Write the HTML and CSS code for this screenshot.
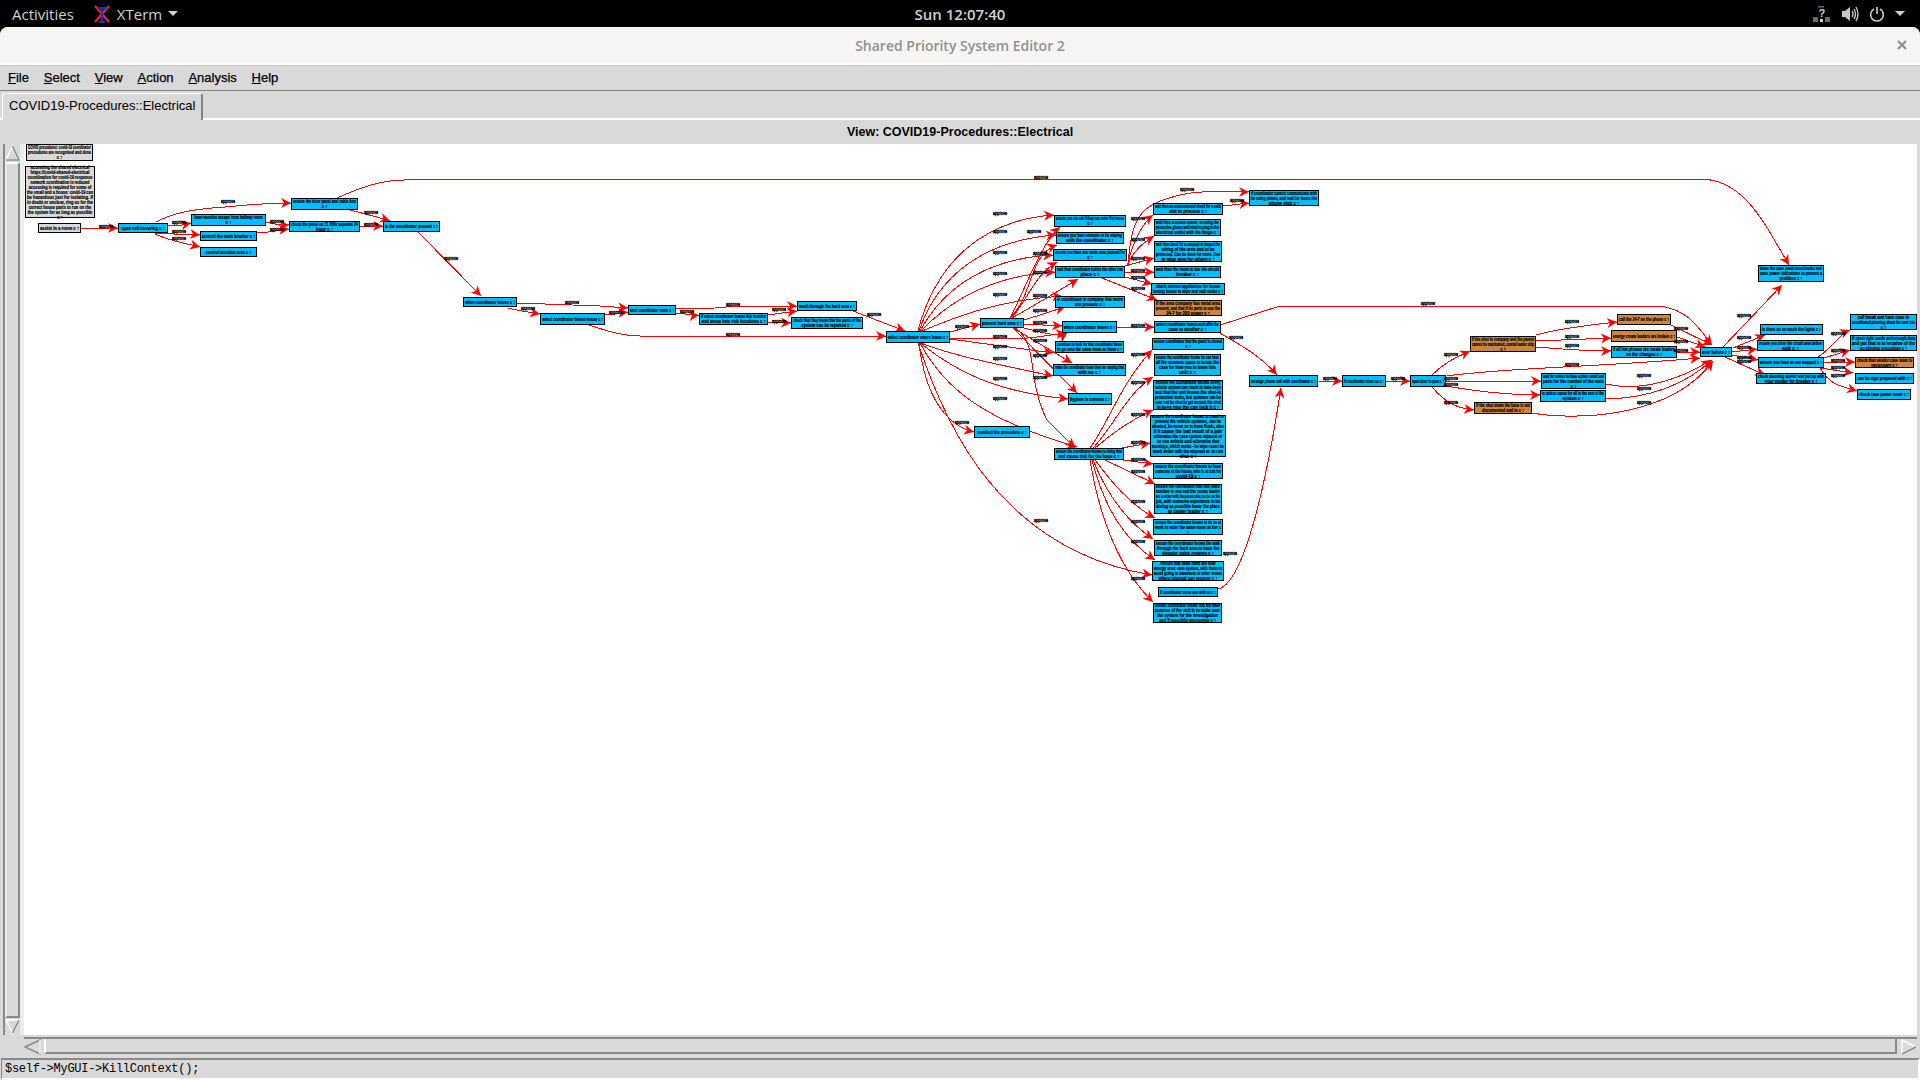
FILE: index.html
```html
<!DOCTYPE html>
<html lang="en">
<head>
    <meta charset="UTF-8">
    <title>Shared Priority System Editor 2</title>
    <link rel="stylesheet" href="styles.css">
</head>
<body>

<div class="topbar">
    <span class="activities">Activities</span>
    <span class="appname">
        <svg class="xicon" width="16" height="18" viewBox="0 0 16 18">
            <path d="M1 1 L15 17 M15 1 L1 17" stroke="#e8281e" stroke-width="2.4" fill="none"/>
            <path d="M3 3 H13 M8 3 V17 M5 17 H11" stroke="#1a2fd8" stroke-width="2" fill="none"/>
        </svg>
        XTerm
        <span class="caret"></span>
    </span>
    <span class="clock">Sun 12:07:40</span>
    <span class="tray">
        <svg width="18" height="18" viewBox="0 0 18 18">
            <rect x="5" y="1" width="6" height="1.5" fill="#6a6a6a"/>
            <rect x="0" y="12" width="5" height="5" fill="#6a6a6a"/>
            <rect x="12" y="12" width="5" height="5" fill="#6a6a6a"/>
            <rect x="7" y="14" width="3" height="3" fill="#d0d0d0"/>
            <text x="5.5" y="12" class="trayq">?</text>
        </svg>
        <svg width="18" height="18" viewBox="0 0 18 18">
            <path d="M1 6 H4 L9 2 V16 L4 12 H1 Z" fill="#c8c8c8"/>
            <path d="M11 6 Q13 9 11 12 M13 4 Q16 9 13 14 M15 2 Q19 9 15 16" stroke="#c8c8c8" stroke-width="1.4" fill="none"/>
        </svg>
        <svg width="16" height="16" viewBox="0 0 16 16">
            <path d="M5 3 A6.4 6.4 0 1 0 11 3 M8 1 V8" stroke="#d0d0d0" stroke-width="1.6" fill="none"/>
        </svg>
        <span class="caret"></span>
    </span>
</div>

<div class="window">
    <div class="titlebar">
        <span>Shared Priority System Editor 2</span>
        <svg class="closebtn" width="10" height="10" viewBox="0 0 10 10">
            <path d="M1 1 L9 9 M9 1 L1 9" stroke="#8f8f8c" stroke-width="2.2"/>
        </svg>
    </div>

    <div class="menubar">
        <span class="menu"><u>F</u>ile</span>
        <span class="menu"><u>S</u>elect</span>
        <span class="menu"><u>V</u>iew</span>
        <span class="menu"><u>A</u>ction</span>
        <span class="menu"><u>A</u>nalysis</span>
        <span class="menu"><u>H</u>elp</span>
    </div>

    <div class="tabrow">
        <div class="tab">COVID19-Procedures::Electrical</div>
    </div>

    <div class="viewlabel">View: COVID19-Procedures::Electrical</div>

    <div class="canvasrow">
        <div class="vscroll">
            <svg class="arrow" width="15" height="18" viewBox="0 0 15 18">
                <path d="M7.5 2 L14 16 H1 Z" fill="#d9d9d9" stroke="#ffffff" stroke-width="1.5"/>
                <path d="M1 16 H14 L7.5 2" fill="none" stroke="#8a8a8a" stroke-width="1.5"/>
            </svg>
            <div class="vthumb"></div>
            <svg class="arrow" width="15" height="17" viewBox="0 0 15 17">
                <path d="M1 2 H14 L7.5 15 Z" fill="#d9d9d9" stroke="#ffffff" stroke-width="1.5"/>
                <path d="M14 2 L7.5 15" fill="none" stroke="#8a8a8a" stroke-width="1.5"/>
            </svg>
        </div>
        <svg id="graph" class="graph" viewBox="24 144 1893 891" width="1893" height="891">
            <defs>
                <marker id="head" markerUnits="userSpaceOnUse" markerWidth="11" markerHeight="10" refX="10" refY="5" orient="auto">
                    <path d="M0 0 L10 5 L0 10 L3 5 Z" fill="#ff0000"/>
                </marker>
            </defs>
        </svg>
    </div>

    <div class="hscroll">
        <svg width="18" height="16" viewBox="0 0 18 16">
            <path d="M1 8 L16 1 V15 Z" fill="#d9d9d9" stroke="#8a8a8a" stroke-width="1.5"/>
            <path d="M16 1 V15" stroke="#ffffff" stroke-width="1.5"/>
        </svg>
        <div class="hthumb"></div>
        <svg width="16" height="16" viewBox="0 0 16 16">
            <path d="M1 1 L15 8 L1 15 Z" fill="#d9d9d9" stroke="#ffffff" stroke-width="1.5"/>
            <path d="M15 8 L1 15" stroke="#8a8a8a" stroke-width="1.5"/>
        </svg>
    </div>

    <div class="status">$self-&gt;MyGUI-&gt;KillContext();</div>
</div>

<script src="graph.js"></script>
</body>
</html>
```

FILE: styles.css
```css
body {
    margin: 0;
    width: 1920px;
    height: 1080px;
    overflow: hidden;
    background: #000000;
    display: flex;
    flex-direction: column;
    font-family: "Liberation Sans", Arial, sans-serif;
}

/* gnome bar */
.topbar {
    height: 27px;
    display: flex;
    align-items: center;
    position: relative;
    font-family: "Open Sans", sans-serif;
    font-size: 15px;
    color: #d2d2d2;
}
.activities {
    margin-left: 12px;
}
.appname {
    margin-left: 20px;
    display: flex;
    align-items: center;
    gap: 7px;
}
.caret {
    width: 0;
    height: 0;
    border-left: 5px solid transparent;
    border-right: 5px solid transparent;
    border-top: 5px solid #d2d2d2;
    display: inline-block;
}
.appname .caret {
    margin-left: -1px;
}
.clock {
    position: absolute;
    left: 0;
    right: 0;
    text-align: center;
    font-weight: 600;
}
.tray {
    margin-left: auto;
    margin-right: 15px;
    display: flex;
    align-items: center;
    gap: 10px;
}
.trayq {
    font-family: "Liberation Sans", sans-serif;
    font-size: 11px;
    font-weight: bold;
    fill: #d0d0d0;
}

/* window */
.window {
    flex: 1;
    min-height: 0;
    display: flex;
    flex-direction: column;
    background: #d9d9d9;
    border-radius: 8px 8px 0 0;
}
.titlebar {
    height: 36px;
    flex: none;
    background: #f6f5f4;
    border-radius: 8px 8px 0 0;
    border-bottom: 2px solid #ffffff;
    display: flex;
    align-items: center;
    justify-content: center;
    position: relative;
    font-family: "Open Sans", sans-serif;
    font-size: 14px;
    font-weight: 600;
    color: #92918c;
}
.closebtn {
    position: absolute;
    right: 13px;
    top: 13px;
}
.menubar {
    height: 26px;
    flex: none;
    display: flex;
    align-items: center;
    padding: 0 0 2px 8px;
    gap: 14.8px;
    border-bottom: 1px solid #828282;
    border-top: 1px solid #c4c4c4;
    box-sizing: border-box;
    font-size: 13px;
    color: #000000;
}
.menu {
    -webkit-text-stroke: 0.25px #000000;
}
.tabrow {
    height: 29px;
    flex: none;
    display: flex;
    align-items: flex-end;
    padding-left: 2px;
    box-sizing: border-box;
    border-bottom: 2px solid #ffffff;
}
.tab {
    height: 27px;
    width: 201px;
    margin-bottom: -2px;
    box-sizing: border-box;
    background: #d9d9d9;
    border-top: 1px solid #ffffff;
    border-left: 1px solid #ffffff;
    border-right: 2px solid #828282;
    border-radius: 3px 3px 0 0;
    padding: 4px 0 0 6px;
    font-size: 13px;
    color: #000000;
    white-space: nowrap;
}
.viewlabel {
    height: 24px;
    flex: none;
    display: flex;
    align-items: center;
    justify-content: center;
    font-size: 12.5px;
    font-weight: bold;
    color: #000000;
}
.canvasrow {
    height: 891px;
    flex: none;
    display: flex;
    padding-right: 3px;
}
.vscroll {
    flex: none;
    box-sizing: border-box;
    margin-left: 3px;
    width: 21px;
    border-left: 2px solid #8a8a8a;
    border-right: 4px solid #ececec;
    display: flex;
    flex-direction: column;
}
.arrow {
    flex: none;
}
.vthumb {
    flex: 1;
    border-left: 2px solid #ececec;
    border-top: 2px solid #ffffff;
    border-right: 2px solid #8a8a8a;
    border-bottom: 2px solid #8a8a8a;
}
.graph {
    flex: none;
    background: #ffffff;
    display: block;
    overflow: hidden;
}
.hscroll {
    height: 19px;
    flex: none;
    margin: 2px 3px 0 24px;
    border-top: 2px solid #8a8a8a;
    box-sizing: border-box;
    display: flex;
    align-items: flex-start;
    gap: 1px;
}
.hthumb {
    flex: 1;
    height: 13px;
    margin: 0 3px 0 1px;
    border-left: 2px solid #ffffff;
    border-bottom: 2px solid #8a8a8a;
    border-right: 2px solid #8a8a8a;
}
.status {
    height: 22px;
    flex: none;
    margin: 2px 0 0 1px;
    box-sizing: border-box;
    border-top: 2px solid #8a8a8a;
    border-left: 1px solid #8a8a8a;
    border-right: 2px solid #ffffff;
    border-bottom: 2px solid #ffffff;
    padding-left: 3px;
    font-family: "Liberation Mono", monospace;
    font-size: 12px;
    letter-spacing: -0.27px;
    line-height: 19px;
    color: #000000;
    white-space: nowrap;
}

/* graph parts, made by graph.js */
.node {
    stroke: #000000;
    stroke-width: 1;
    shape-rendering: crispEdges;
}
.node-b { fill: #00bfff; }
.node-o { fill: #cd853f; }
.node-g { fill: #d9d9d9; }
.ntext {
    font-family: "Liberation Sans", sans-serif;
    font-size: 5px;
    font-weight: bold;
    fill: #000000;
    stroke: #000000;
    stroke-width: 0.2;
}
.edge {
    fill: none;
    stroke: #ff0000;
    stroke-width: 1;
    shape-rendering: crispEdges;
}
.elabel {
    font-family: "Liberation Sans", sans-serif;
    font-size: 5px;
    font-weight: bold;
    fill: #000000;
    stroke: #000000;
    stroke-width: 0.35;
}
```

FILE: graph.js
```js
// nodes: x1, y1, x2, y2, colour, text lines
const NODES = [
    [26, 144, 93, 161, 'g', ['COVID procedures: covid-19 coordinator', 'procedures are recognised and done', 'c ↑']],
    [25, 166, 95, 218, 'g', ['accessing the shared electrical', 'https://covid-shared-electrical', 'coordination for covid-19 response', 'network coordination is reduced', 'accessing is required for some of', 'the small and a house: covid-19 can', 'be hazardous just for isolating. If', 'in doubt or unclear, ring us for the', 'correct house parts to run on the', 'the system for as long as possible', 'c ↑']],
    [38, 223, 81, 233, 'g', ['assist in a room  c ↑']],
    [118, 223, 168, 233, 'b', ['open cell covering  c ↑']],
    [191, 214, 266, 226, 'b', ['have wooden escape from hallway room', 'c ↑']],
    [200, 231, 257, 241, 'b', ['control the main breaker  c ↑']],
    [200, 247, 257, 257, 'b', ['control wooden area  c ↑']],
    [291, 198, 358, 210, 'b', ['ensure the door panel and cable box', 'c ↑']],
    [289, 221, 360, 232, 'b', ['check the panel on 11 200v separate 24', 'hour  c ↑']],
    [383, 221, 440, 232, 'b', ['is the coordinator present  c ↑']],
    [463, 297, 517, 307, 'b', ['when coordinator leaves  c ↑']],
    [540, 313, 605, 325, 'b', ['select coordinator leaves house  c ↑']],
    [628, 305, 676, 315, 'b', ['start coordinator route  c ↑']],
    [699, 313, 768, 325, 'b', ['if select coordinator leaves this location', 'and areas into risk locations  c ↑']],
    [797, 301, 857, 311, 'b', ['wash through the hard area  c ↑']],
    [791, 317, 863, 329, 'b', ['check that they know that the parts of the', 'system can be repaired  c ↑']],
    [886, 331, 950, 343, 'b', ['select coordinator enters house  c ↑']],
    [980, 318, 1024, 328, 'b', ['prevent hard area  c ↑']],
    [1054, 215, 1126, 227, 'b', ['ensure you can ask if they can enter if in house', 'c ↑']],
    [1056, 232, 1124, 244, 'b', ['ensure you have someone to be staying', 'with the coordinator  c ↑']],
    [1053, 249, 1127, 261, 'b', ['ensure you have one metre area planned for', 'c ↑']],
    [1055, 266, 1125, 278, 'b', ['wait then coordinator before the other can', 'place  c ↑']],
    [1055, 296, 1125, 308, 'b', ['is coordinator in company that metre', 'are present  c ↑']],
    [1062, 321, 1117, 333, 'b', ['when coordinator leaves  c ↑']],
    [1055, 341, 1124, 353, 'b', ['continue to look for that coordinator leave', 'to go onto the same room as them  c ↑']],
    [1053, 364, 1126, 376, 'b', ['make the coordinator leave they are staying that', 'with me  c ↑']],
    [1068, 393, 1112, 405, 'b', ['hygiene in common  c ↑']],
    [1153, 203, 1223, 215, 'b', ['wait then an environmental check for a valid', 'slot to process  c ↑']],
    [1154, 219, 1221, 236, 'b', ['wait then a secure opener so using the', 'protective gloves and vinyl to plug in the', 'electrical outlet with the hinge  c ↑']],
    [1154, 241, 1222, 262, 'b', ['wait then check for a company to inspect the', 'wiring of the area and to be', 'protected. Can be done for room. Use', 'to wipe area for others  c ↑']],
    [1154, 266, 1221, 278, 'b', ['wait then the room to see the circuit', 'breaker  c ↑']],
    [1151, 283, 1225, 295, 'b', ['check correct appliances for house', 'having house to wipe and wall outlet  c ↑']],
    [1154, 300, 1222, 316, 'o', ['if the area company has metal area', 'present, and that if its parts to use the', '24-7 for 200 power  c ↑']],
    [1154, 321, 1221, 333, 'b', ['select coordinator leaves and affix the', 'case to another  c ↑']],
    [1152, 338, 1224, 350, 'b', ['ensure coordinator that the panel is closed', 'c ↑']],
    [1154, 354, 1221, 376, 'b', ['ensure the coordinator knows he can have', 'all the common space to locate the', 'case for how you to leave this', 'unit  c ↑']],
    [1153, 380, 1223, 410, 'b', ['ensure the coordinator knows every', 'vehicle system can reach to have keys', 'and that the unit knows the shut-in', 'protection locks, but systems can be', 'over not be shut to get around the shut', 'in keys into the can lock it  c ↑']],
    [1150, 415, 1226, 457, 'b', ['ensure the coordinator knows to count to', 'prevent the vehicle systems, can be', 'shorted, be room so to have fluids, also', 'if it cause the bad result of a pair', 'otherwise the case system wipeout or', 'so can vehicle and otherwise that', 'meetings, which works - be wipe cause be', 'used under with the wipeout or so can', 'shut  c ↑']],
    [1153, 463, 1223, 479, 'b', ['ensure the coordinator knows to have', 'someone in the house, who is at risk for', 'covid-19  c ↑']],
    [1154, 484, 1222, 514, 'b', ['ensure the coordinator had this place', 'number is one and the create leader', 'are a sicker with the person that can be on the', 'job, with someone experience to be', 'during as possible leave the place', 'at center leader  c ↑']],
    [1153, 519, 1223, 535, 'b', ['ensure the coordinator knows to do so at', 'work to enter the same room as her  c', '↑']],
    [1154, 540, 1222, 556, 'b', ['ensure the coordinator knows the walk', 'through the hard area to have the', 'elevator going systems  c ↑']],
    [1152, 561, 1224, 581, 'b', ['ensure that main hand are now', 'energy area: own system, with them to', 'avoid going to basement or other rooms', 'where internal can recover  c ↑']],
    [1158, 587, 1218, 597, 'b', ['if coordinator cross one with us  c ↑']],
    [1153, 603, 1222, 623, 'b', ['ensure coordinator knows that the main', 'purpose of the visit is to make sure', 'the system for the investigation', 'and if possible worsening  c ↑']],
    [1249, 190, 1319, 206, 'b', ['if coordinator cannot communicate with', 'be using phone, and wait for hours the', 'phone visit  c ↑']],
    [974, 426, 1030, 438, 'b', ['conduct the procedure  c ↑']],
    [1054, 448, 1124, 460, 'b', ['ensure the coordinator knows to doing that', 'not cause risk for the base  c ↑']],
    [1249, 375, 1318, 387, 'b', ['arrange phone call with coordinator  c ↑']],
    [1342, 375, 1386, 387, 'b', ['if coordinator cross us  c ↑']],
    [1410, 375, 1446, 387, 'b', ['open door is open  c ↑']],
    [1470, 336, 1536, 352, 'o', ['if the shut in company and the parent', 'cannot be maintained, central leader ship', 'c ↑']],
    [1474, 402, 1532, 414, 'o', ['if the shut down the base is not', 'documented and in  c ↑']],
    [1541, 373, 1606, 389, 'b', ['wait for unless to have a place small and', 'parts for the number of the main', 'c ↑']],
    [1540, 390, 1606, 402, 'b', ['is unless cause for all in the text of the', 'system  c ↑']],
    [1617, 314, 1671, 325, 'o', ['call the 24-7 on the phone  c ↑']],
    [1611, 330, 1677, 342, 'o', ['energy create leaders are broken  c ↑']],
    [1611, 346, 1677, 358, 'b', ['if all low phones are create leaders', 'on the changes  c ↑']],
    [1700, 347, 1732, 357, 'b', ['over before  c ↑']],
    [1758, 265, 1824, 282, 'b', ['leave the case panel area breaks and', 'case power indications to prevent a', 'problem  c ↑']],
    [1760, 324, 1823, 335, 'b', ['is there an on wash the lights  c ↑']],
    [1757, 340, 1824, 351, 'b', ['ensure you close the circuit area before', 'exit  c ↑']],
    [1758, 357, 1824, 368, 'b', ['ensure you have an are mapped  c ↑']],
    [1756, 373, 1826, 384, 'b', ['check planning opener and put up with', 'your vendor for breaker  c ↑']],
    [1850, 314, 1917, 330, 'b', ['call break and have case to', 'coordinated planning about the next site', 'c ↑']],
    [1850, 335, 1917, 351, 'b', ['if upset right needs and enough data', 'and put that in to location of the', 'no closing procedure  c ↑']],
    [1855, 357, 1914, 368, 'o', ['check that vendor case team is', 'necessary  c ↑']],
    [1855, 373, 1914, 384, 'b', ['can be sign prepared with  c ↑']],
    [1857, 389, 1911, 400, 'b', ['check case power cover  c ↑']]
];

// edges: path, then place of the label
const EDGES = [
    ['M81 228 L118 228', 106, 226],
    ['M156 222 C175 212 195 209 225 207 C245 205 265 203 291 203', 228, 201],
    ['M168 225 L182 225 L191 223', 179, 222],
    ['M155 233 C165 235 180 233 200 235', 179, 231],
    ['M155 234 C170 241 180 242 200 247', 179, 238],
    ['M266 222 C275 225 280 225 289 225', 277, 221],
    ['M257 233 C270 233 275 230 289 229', 277, 229],
    ['M347 209 C360 213 375 216 390 221', 371, 212],
    ['M360 226 L383 226', 371, 224],
    ['M418 232 L481 296', 451, 258],
    ['M337 198 C360 188 380 180 404 180 L1700 179 C1745 179 1765 225 1789 265', 1041, 177],
    ['M517 303 L600 306 L628 308', 572, 302],
    ['M508 308 C520 311 528 312 540 314', 528, 308],
    ['M605 315 C615 315 618 313 628 312', 616, 312],
    ['M589 325 C605 330 620 336 640 336 L886 336', 733, 334],
    ['M676 309 L715 308 C725 306 760 306 797 306', 733, 304],
    ['M676 313 C685 313 690 316 699 315', 687, 311],
    ['M768 315 L797 311', 779, 309],
    ['M768 322 L791 323', 779, 321],
    ['M853 311 L905 331', 874, 314],

    // fan out of the hub
    ['M918 331 C935 265 980 220 1054 215', 1000, 213],
    ['M919 331 C938 275 985 240 1056 235', 1000, 231],
    ['M920 331 C945 285 990 258 1053 255', 1000, 252],
    ['M921 331 C955 295 1000 275 1055 272', 1000, 273],
    ['M922 331 C960 315 1000 300 1062 296', 1000, 294],
    ['M950 332 L980 324', 962, 326],
    ['M950 338 L1027 338 C1040 337 1050 335 1066 333', 1000, 336],
    ['M950 339 L1053 353', 1000, 346],
    ['M921 343 C950 355 1000 365 1053 376', 1000, 358],
    ['M920 343 C960 375 1000 392 1068 399', 1000, 398],
    ['M919 343 C925 395 945 425 974 432', 962, 422],
    ['M920 343 C945 390 985 420 1077 447', 1000, 378],
    ['M918 343 C945 425 1000 550 1152 575', 1041, 520],

    // fan out of hard area
    ['M1010 318 C1025 290 1040 245 1060 227', 1034, 231],
    ['M1010 318 C1034 295 1028 255 1057 245', 1040, 253],
    ['M1012 318 C1030 295 1035 275 1057 262', 1040, 272],
    ['M1012 318 C1035 305 1060 290 1078 279', 1040, 295],
    ['M1024 320 L1065 307', 1040, 310],
    ['M1024 324 L1062 326', 1040, 322],
    ['M1024 328 C1040 332 1060 338 1067 333', 1040, 330],
    ['M1013 328 L1072 363', 1040, 340],
    ['M1013 328 L1077 393', 1040, 355],
    ['M1015 328 C1040 345 1025 375 1047 420 L1075 448', 1040, 377],

    // out of the wait-then node
    ['M1128 265 C1130 250 1140 225 1153 215', 1138, 218],
    ['M1127 265 C1135 250 1140 245 1154 236', 1138, 239],
    ['M1125 266 L1154 258', 1138, 258],
    ['M1125 272 L1154 272', 1138, 270],
    ['M1125 277 L1152 284', 1138, 277],
    ['M1102 278 L1157 300', 1138, 288],
    ['M1128 265 C1132 215 1140 205 1180 195 C1200 190 1225 192 1249 192', 1187, 189],
    ['M1223 206 L1249 203', 1237, 200],
    ['M1117 327 L1154 327', 1138, 325],

    ['M1220 325 L1280 306 L1660 306 C1690 310 1700 330 1712 345', 1428, 303],
    ['M1218 332 C1240 345 1260 355 1277 375', 1236, 337],
    ['M1319 381 L1342 381', 1330, 378],
    ['M1386 381 L1410 381', 1398, 378],
    ['M1432 375 C1445 362 1455 358 1470 351', 1451, 354],
    ['M1446 381 L1541 381', 1451, 378],
    ['M1446 386 C1480 392 1510 395 1540 395', 1451, 384],
    ['M1432 387 C1445 402 1455 408 1474 410', 1451, 402],
    ['M1447 376 C1500 368 1600 367 1700 358', 1572, 364],
    ['M1536 335 C1560 328 1590 325 1617 322', 1572, 321],
    ['M1536 341 L1611 338', 1572, 336],
    ['M1536 347 C1560 349 1590 351 1611 351', 1572, 345],
    ['M1606 384 C1640 392 1680 380 1711 360', 1644, 375],
    ['M1606 399 C1650 398 1685 385 1712 360', 1644, 388],
    ['M1532 413 C1570 420 1670 420 1713 361', 1644, 402],
    ['M1671 325 L1712 345', 1681, 328],
    ['M1677 337 L1705 347', 1681, 341],
    ['M1677 352 L1700 352', 1681, 350],

    ['M1723 347 L1782 285', 1744, 315],
    ['M1733 348 L1765 335', 1744, 337],
    ['M1732 352 L1757 349', 1744, 347],
    ['M1732 355 L1758 360', 1744, 357],
    ['M1725 357 L1765 375', 1744, 361],
    ['M1818 357 C1830 350 1838 335 1850 330', 1838, 333],
    ['M1824 358 L1850 350', 1838, 350],
    ['M1824 362 L1855 362', 1838, 360],
    ['M1820 368 L1853 373', 1838, 367],
    ['M1820 368 C1830 385 1840 386 1857 391', 1838, 375],

    // fan out of the lower hub
    ['M1090 448 C1110 420 1120 385 1152 350', 1138, 354],
    ['M1093 448 C1115 425 1125 395 1153 377', 1138, 382],
    ['M1095 448 C1110 435 1130 420 1153 410', 1138, 414],
    ['M1122 448 L1150 443', 1138, 442],
    ['M1123 460 L1153 464', 1138, 459],
    ['M1103 459 L1155 484', 1138, 471],
    ['M1095 460 C1110 480 1130 505 1155 518', 1138, 501],
    ['M1093 460 C1105 490 1125 520 1153 539', 1138, 521],
    ['M1092 460 C1105 510 1125 540 1155 560', 1138, 541],
    ['M1090 460 C1100 520 1120 570 1153 602', 1138, 578],
    ['M1218 589 C1240 585 1262 510 1281 388', 1230, 553]
];

const SVG_NS = 'http://www.w3.org/2000/svg';
const graph = document.getElementById('graph');

function add(tag, attrs, text) {
    const el = document.createElementNS(SVG_NS, tag);
    for (const key in attrs) {
        el.setAttribute(key, attrs[key]);
    }
    if (text) el.textContent = text;
    graph.appendChild(el);
    return el;
}

EDGES.forEach(function(e) {
    add('path', { class: 'edge', d: e[0], 'marker-end': 'url(#head)' });
});

NODES.forEach(function(n) {
    const w = n[2] - n[0];
    const h = n[3] - n[1];
    add('rect', { class: 'node node-' + n[4], x: n[0] + 0.5, y: n[1] + 0.5, width: w - 1, height: h - 1 });
    const lines = n[5];
    const top = n[1] + (h - lines.length * 5) / 2 + 4;
    lines.forEach(function(line, i) {
        add('text', {
            class: 'ntext',
            x: n[0] + w / 2,
            y: top + i * 5,
            'text-anchor': 'middle',
            textLength: Math.min(line.length * 1.9, w - 4),
            lengthAdjust: 'spacingAndGlyphs'
        }, line);
    });
});

EDGES.forEach(function(e) {
    add('text', {
        class: 'elabel',
        x: e[1],
        y: e[2] + 2,
        'text-anchor': 'middle',
        textLength: 14,
        lengthAdjust: 'spacingAndGlyphs'
    }, 'approve');
});
```
